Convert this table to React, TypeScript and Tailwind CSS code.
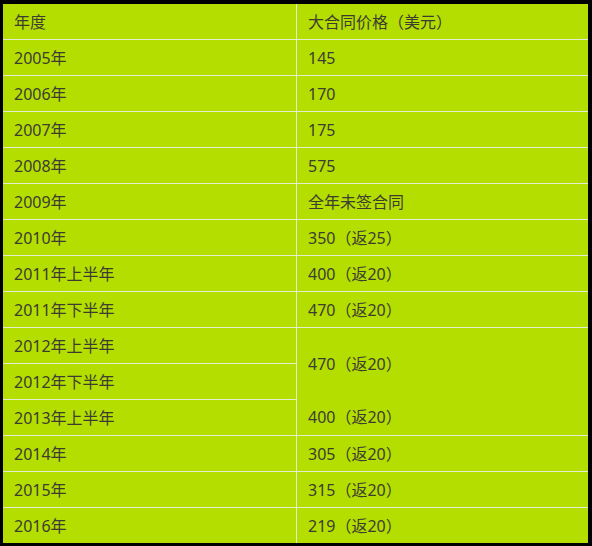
const rows: [string, string | null][] = [
  ["2005年", "145"],
  ["2006年", "170"],
  ["2007年", "175"],
  ["2008年", "575"],
  ["2009年", "全年未签合同"],
  ["2010年", "350（返25）"],
  ["2011年上半年", "400（返20）"],
  ["2011年下半年", "470（返20）"],
  ["2012年上半年", "merged"],
  ["2012年下半年", null],
  ["2013年上半年", null],
  ["2014年", "305（返20）"],
  ["2015年", "315（返20）"],
  ["2016年", "219（返20）"],
];

export default function App() {
  return (
    <div
      className="h-[546px] w-[592px] overflow-hidden border-t-4 border-r-4 border-b-[3px] border-l-[3px] border-black bg-[#b4de00] text-[16px] text-[#3c3c30]"
      style={{ fontFamily: '"Noto Sans", "Noto Sans CJK SC", sans-serif' }}
    >
      <div className="grid grid-cols-[294px_291px] auto-rows-[36px]">
        <div className="flex items-center border-r border-b border-[#e6edcf] pl-[11px]">年度</div>
        <div className="flex items-center border-b border-[#e6edcf] pl-[11px]">大合同价格（美元）</div>

        {rows.map(([year, price], i) => {
          const last = i === rows.length - 1;
          return (
            <div key={year} className="contents">
              <div
                className={
                  last
                    ? "flex items-center border-r border-[#e6edcf] pl-[11px]"
                    : "flex items-center border-r border-b border-[#e6edcf] pl-[11px]"
                }
              >
                {year}
              </div>
              {price === "merged" ? (
                <div className="row-span-3 flex flex-col border-b border-[#e6edcf] pl-[11px]">
                  <div className="flex h-[71px] items-center">470（返20）</div>
                  <div className="flex flex-1 items-center">400（返20）</div>
                </div>
              ) : price !== null ? (
                <div
                  className={
                    last
                      ? "flex items-center pl-[11px]"
                      : "flex items-center border-b border-[#e6edcf] pl-[11px]"
                  }
                >
                  {price}
                </div>
              ) : null}
            </div>
          );
        })}
      </div>
    </div>
  );
}
